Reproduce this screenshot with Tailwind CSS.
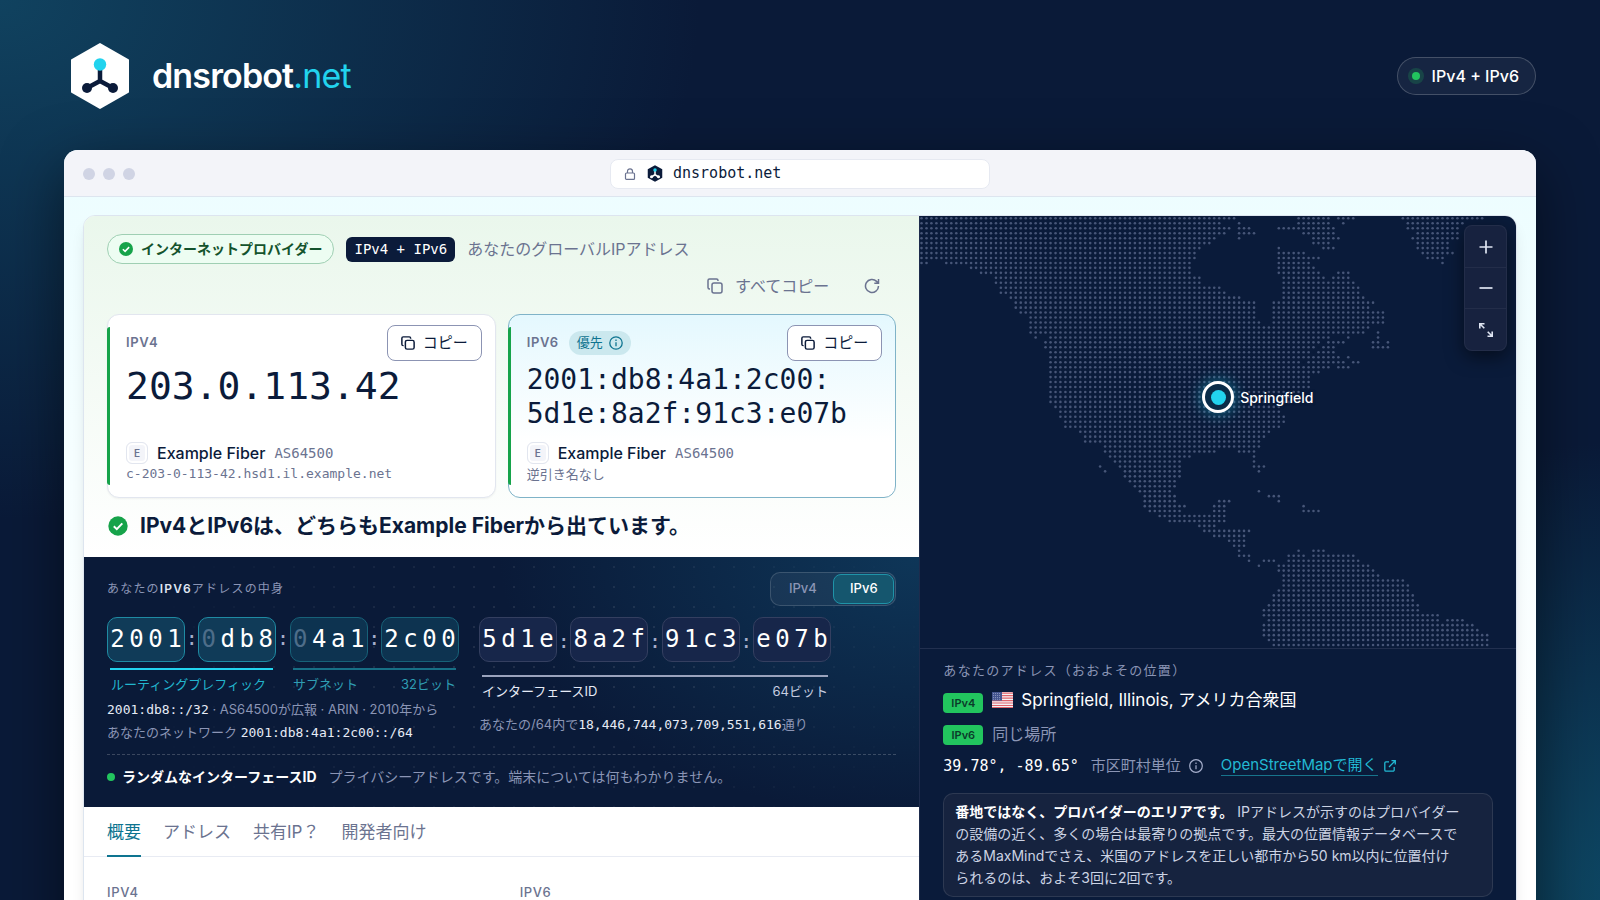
<!DOCTYPE html>
<html lang="ja">
<head>
    <meta charset="UTF-8">
    <meta name="viewport" content="width=device-width, initial-scale=1.0">
    <title>dnsrobot.net - IPv4 + IPv6</title>
    <script src="https://cdn.jsdelivr.net/npm/@tailwindcss/browser@4"></script>
    <style>
        body {
            font-family: 'Inter', 'Noto Sans CJK JP', sans-serif;
        }
        .mono {
            font-family: 'DejaVu Sans Mono', 'Noto Sans CJK JP', monospace;
        }
        /* Page backdrop: navy with teal light in two corners */
        .backdrop {
            background:
                radial-gradient(700px 520px at 0% 0%, #10425f 0%, rgba(16, 66, 95, 0) 100%),
                radial-gradient(620px 460px at 104% 100%, #0e4a66 0%, rgba(14, 74, 102, 0) 100%),
                #0a1a38;
        }
        /* Faint dot grid behind the address anatomy */
        .dot-grid {
            background-image: radial-gradient(circle, rgba(255, 255, 255, 0.09) 1px, transparent 1px);
            background-size: 20px 20px;
            mask-image: radial-gradient(ellipse 50% 90% at 55% 45%, #000 30%, transparent 100%);
        }
    </style>
</head>

<body class="backdrop h-screen overflow-hidden px-16 text-[#0b1b3a]">
    <!-- Header -->
    <header class="flex h-[150px] items-center justify-between pt-[2px]">
        <a href="#" class="flex items-center gap-[22px] pl-[6px]">
            <svg class="h-[68px] w-[60px]" viewBox="0 0 60 68" fill="none">
                <path d="M30 2 L58 18 V50 L30 66 L2 50 V18 Z" fill="#fff" stroke="#fff" stroke-width="2" stroke-linejoin="round"/>
                <path d="M30 24 V39 M17 46 L30 39 L43 46" stroke="#0b1b3a" stroke-width="4.5" stroke-linejoin="round"/>
                <circle cx="17" cy="46" r="5" fill="#0b1b3a"/>
                <circle cx="43" cy="46" r="5" fill="#0b1b3a"/>
                <circle cx="30" cy="22.500" r="6.200" fill="#22d3ee"/>
            </svg>
            <span class="text-[34px] leading-10 font-semibold tracking-tight text-white">dnsrobot<span class="font-normal text-[#22d3ee]">.net</span></span>
        </a>
        <div class="flex h-[38px] items-center gap-3 rounded-full border border-white/20 bg-white/5 pr-4 pl-[14px] text-[16px] font-medium text-white">
            <span class="h-2 w-2 rounded-full bg-[#22c55e] ring-4 ring-[#22c55e]/20"></span>
            IPv4 + IPv6
        </div>
    </header>

    <!-- Browser window -->
    <div class="overflow-hidden rounded-t-[14px] bg-linear-to-b from-[#ecfdff] to-white to-80% shadow-[0_20px_60px_rgba(0,0,0,0.5)]">
        <div class="grid h-[47px] grid-cols-[1fr_380px_1fr] items-center border-b border-[#dde5ef] bg-[#f3f4f9] px-[19px] pt-px">
            <div class="flex gap-2">
                <span class="h-3 w-3 rounded-full bg-[#d0d4e4]"></span>
                <span class="h-3 w-3 rounded-full bg-[#d0d4e4]"></span>
                <span class="h-3 w-3 rounded-full bg-[#d0d4e4]"></span>
            </div>
            <div class="mono flex h-[30px] items-center rounded-lg border border-[#e6e9f1] bg-white pl-[13px] text-[15px] font-medium">
                <svg class="mr-[11px] h-3 w-3" viewBox="0 0 12 12" fill="none" stroke="#6b7390" stroke-width="1.200">
                    <rect x="1.500" y="5" width="9" height="6.400" rx="1"/>
                    <path d="M3.500 5 V3.300 a2.500 2.500 0 0 1 5 0 V5"/>
                </svg>
                <svg class="mr-[10px] h-[17px] w-4" viewBox="0 0 60 68" fill="none">
                    <path d="M30 1 L59 17 V51 L30 67 L1 51 V17 Z" fill="#0b1b3a"/>
                    <path d="M30 22 V39 M17 47 L30 39 L43 47" stroke="#fff" stroke-width="6"/>
                    <circle cx="16" cy="47" r="6" fill="#fff"/>
                    <circle cx="44" cy="47" r="6" fill="#fff"/>
                    <circle cx="30" cy="20" r="7" fill="#22d3ee"/>
                </svg>
                dnsrobot.net
            </div>
        </div>

        <div class="px-[19px] pt-[18px]">
            <main class="grid grid-cols-[7fr_5fr] overflow-hidden rounded-t-xl border border-[#dde5ef] bg-white shadow-lg">
                <!-- Left column -->
                <div class="min-w-0">
                    <section class="bg-linear-to-b from-[#eaf7ec] to-white px-[23px] pt-[18px] pb-[15px]">
                        <div class="flex h-[30px] items-center gap-3">
                            <span class="flex h-[30px] items-center gap-2 rounded-full border border-[#9fcfb3] bg-[#edfdf2] px-[11px] text-[14px] leading-5 font-bold text-[#14532d]">
                                <svg class="h-[14px] w-[14px]" viewBox="0 0 20 20"><circle cx="10" cy="10" r="10" fill="#16a34a"/><path d="M5.500 10.300 L8.700 13.400 L14.500 7.300" fill="none" stroke="#fff" stroke-width="2.200"/></svg>
                                インターネットプロバイダー
                            </span>
                            <span class="mono flex h-[25px] items-center rounded-md bg-[#0b1b3a] px-2 text-[14px] text-white">IPv4 + IPv6</span>
                            <span class="text-[16px] leading-5 text-[#6b7390]">あなたのグローバルIPアドレス</span>
                        </div>
                        <div class="mt-[2px] flex h-10 items-center justify-end text-[#6b7390]">
                            <button class="flex h-10 items-center gap-3 px-[19px] text-[16px]">
                                <svg class="h-4 w-4" viewBox="0 0 16 16" fill="none" stroke="currentColor" stroke-width="1.500"><rect x="5" y="5" width="10" height="10" rx="2"/><path d="M3 11 H2.500 A1.500 1.500 0 0 1 1 9.500 V2.500 A1.500 1.500 0 0 1 2.500 1 H9.500 A1.500 1.500 0 0 1 11 2.500 V3"/></svg>
                                すべてコピー
                            </button>
                            <button aria-label="更新" class="flex h-10 w-12 items-center justify-center">
                                <svg class="h-4 w-4" viewBox="0 0 16 16" fill="none" stroke="currentColor" stroke-width="1.500"><path d="M14.500 8 A6.500 6.500 0 1 1 12.600 3.400 L14.500 5.200 M14.500 1 V5.200 H10.300"/></svg>
                            </button>
                        </div>

                        <div class="mt-2 grid grid-cols-2 gap-3">
                            <article class="relative rounded-xl border border-[#e2e6ef] bg-white pt-[10px] pr-[13px] pb-[13px] pl-[18px] shadow-xs">
                                <span class="absolute top-3 bottom-3 -left-px w-[3px] rounded-l bg-[#16a34a]"></span>
                                <div class="flex h-9 items-center justify-between">
                                    <h3 class="text-[13px] font-semibold tracking-wider text-[#6b7390]">IPV4</h3>
                                    <button class="flex h-9 items-center gap-2 rounded-lg border border-[#8c94b3] bg-white px-[13px] text-[15px]">
                                        <svg class="h-[14px] w-[14px]" viewBox="0 0 16 16" fill="none" stroke="currentColor" stroke-width="1.700"><rect x="5" y="5" width="10" height="10" rx="2"/><path d="M3 11 H2.500 A1.500 1.500 0 0 1 1 9.500 V2.500 A1.500 1.500 0 0 1 2.500 1 H9.500 A1.500 1.500 0 0 1 11 2.500 V3"/></svg>
                                        コピー
                                    </button>
                                </div>
                                <p class="mono mt-[2px] h-[68px] text-[38px] leading-[46px]">203.0.113.42</p>
                                <div class="mt-[11px] flex h-[22px] items-center gap-[9px]">
                                    <span class="flex h-[22px] w-[22px] items-center justify-center rounded-md border border-[#e2e6ef] bg-[#f3f4f9] text-[10px] font-semibold text-[#6b7390] ring-2 ring-white ring-inset">E</span>
                                    <span class="text-[16px] font-medium">Example Fiber</span>
                                    <span class="mono text-[14px] text-[#6b7390]">AS64500</span>
                                </div>
                                <p class="mono text-[13px] leading-5 text-[#6b7390]">c-203-0-113-42.hsd1.il.example.net</p>
                            </article>

                            <article class="relative rounded-xl border border-[#7fb3c8] bg-linear-to-b from-[#e4f8fe] to-white to-70% pt-[10px] pr-[13px] pb-[13px] pl-[18px]">
                                <span class="absolute top-3 bottom-3 -left-px w-[3px] rounded-l bg-[#16a34a]"></span>
                                <div class="flex h-9 items-center">
                                    <h3 class="text-[13px] font-semibold tracking-wider text-[#6b7390]">IPV6</h3>
                                    <span class="ml-[10px] flex h-6 items-center gap-[6px] rounded-full bg-[#cbe8ee] px-2 text-[13px] text-[#0e7490]">
                                        優先
                                        <svg class="h-[14px] w-[14px]" viewBox="0 0 14 14" fill="none" stroke="currentColor" stroke-width="1.300"><circle cx="7" cy="7" r="6.200"/><path d="M7 6.200 V10.200 M7 3.600 V5"/></svg>
                                    </span>
                                    <button class="ml-auto flex h-9 items-center gap-2 rounded-lg border border-[#8c94b3] bg-white px-[13px] text-[15px]">
                                        <svg class="h-[14px] w-[14px]" viewBox="0 0 16 16" fill="none" stroke="currentColor" stroke-width="1.700"><rect x="5" y="5" width="10" height="10" rx="2"/><path d="M3 11 H2.500 A1.500 1.500 0 0 1 1 9.500 V2.500 A1.500 1.500 0 0 1 2.500 1 H9.500 A1.500 1.500 0 0 1 11 2.500 V3"/></svg>
                                        コピー
                                    </button>
                                </div>
                                <p class="mono mt-[2px] h-[68px] text-[28px] leading-[34px]">2001:db8:4a1:2c00:<br>5d1e:8a2f:91c3:e07b</p>
                                <div class="mt-[11px] flex h-[22px] items-center gap-[9px]">
                                    <span class="flex h-[22px] w-[22px] items-center justify-center rounded-md border border-[#e2e6ef] bg-[#f3f4f9] text-[10px] font-semibold text-[#6b7390] ring-2 ring-white ring-inset">E</span>
                                    <span class="text-[16px] font-medium">Example Fiber</span>
                                    <span class="mono text-[14px] text-[#6b7390]">AS64500</span>
                                </div>
                                <p class="text-[13px] leading-5 text-[#6b7390]">逆引き名なし</p>
                            </article>
                        </div>

                        <h2 class="mt-3 flex h-8 items-center gap-3 text-[21px] leading-8 font-bold">
                            <svg class="ml-px h-5 w-5" viewBox="0 0 20 20"><circle cx="10" cy="10" r="9.700" fill="#16a34a"/><path d="M5.800 10.300 L8.800 13.200 L14.300 7.400" fill="none" stroke="#fff" stroke-width="2"/></svg>
                            <span>IPv4とIPv6は、どちらもExample Fiberから出ています。</span>
                        </h2>
                    </section>

                    <!-- IPv6 anatomy -->
                    <section class="relative h-[250px] bg-[#0a1a38] bg-[radial-gradient(420px_260px_at_100%_0%,#0e3658,transparent)] px-[23px] pt-[15px] text-[13px] text-[#8b95b5]">
                        <div class="dot-grid pointer-events-none absolute inset-0"></div>
                        <div class="relative flex h-[33px] items-center justify-between">
                            <h3 class="text-[12px] tracking-widest">あなたの<span class="font-semibold text-[#dfe5f2]">IPV6</span>アドレスの中身</h3>
                            <div class="flex h-[34px] items-center rounded-[10px] border border-white/15 bg-white/5 p-px font-medium">
                                <button class="h-[30px] w-[61px]">IPv4</button>
                                <button class="h-[30px] w-[61px] rounded-lg border border-[#1f93a8] bg-[#15566e] text-white">IPv6</button>
                            </div>
                        </div>

                        <div class="relative mt-3 flex gap-5">
                            <div class="w-[352px]">
                                <div class="mono flex h-[45px] text-[24px] leading-[43px] text-white">
                                    <div class="flex w-[78px] rounded-[10px] border border-[#1f8ba3] bg-[#103b58] text-center"><span class="flex-1">2</span><span class="flex-1">0</span><span class="flex-1">0</span><span class="flex-1">1</span></div>
                                    <span class="flex-1 text-center text-[20px] text-[#a5aecb]">:</span>
                                    <div class="flex w-[78px] rounded-[10px] border border-[#1f8ba3] bg-[#103b58] text-center"><span class="flex-1 text-[#4e6d89]">0</span><span class="flex-1">d</span><span class="flex-1">b</span><span class="flex-1">8</span></div>
                                    <span class="flex-1 text-center text-[20px] text-[#a5aecb]">:</span>
                                    <div class="flex w-[78px] rounded-[10px] border border-[#176178] bg-[#0d3350] text-center"><span class="flex-1 text-[#4e6d89]">0</span><span class="flex-1">4</span><span class="flex-1">a</span><span class="flex-1">1</span></div>
                                    <span class="flex-1 text-center text-[20px] text-[#a5aecb]">:</span>
                                    <div class="flex w-[78px] rounded-[10px] border border-[#176178] bg-[#0d3350] text-center"><span class="flex-1">2</span><span class="flex-1">c</span><span class="flex-1">0</span><span class="flex-1">0</span></div>
                                </div>
                                <div class="mt-[6px] grid grid-cols-2 gap-5 px-[3px] leading-5">
                                    <div class="border-t-2 border-[#22d3ee] pt-1 pl-px whitespace-nowrap text-[#22b5cd]">ルーティングプレフィック</div>
                                    <div class="flex justify-between border-t-2 border-[#176f86] pt-1 text-[#2f9db3]"><span>サブネット</span><span>32ビット</span></div>
                                </div>
                                <p class="mt-1 leading-[23px] whitespace-nowrap"><span class="mono text-[#e6ebf6]">2001:db8::/32</span> · AS64500が広報 · ARIN · 2010年から</p>
                                <p class="leading-[23px] whitespace-nowrap">あなたのネットワーク <span class="mono text-[#e6ebf6]">2001:db8:4a1:2c00::/64</span></p>
                            </div>
                            <div class="w-[352px]">
                                <div class="mono flex h-[45px] text-[24px] leading-[43px] text-white">
                                    <div class="flex w-[78px] rounded-[10px] border border-[#343f60] bg-[#17264a] text-center"><span class="flex-1">5</span><span class="flex-1">d</span><span class="flex-1">1</span><span class="flex-1">e</span></div>
                                    <span class="flex-1 text-center text-[20px] leading-[49px] text-[#a5aecb]">:</span>
                                    <div class="flex w-[78px] rounded-[10px] border border-[#343f60] bg-[#17264a] text-center"><span class="flex-1">8</span><span class="flex-1">a</span><span class="flex-1">2</span><span class="flex-1">f</span></div>
                                    <span class="flex-1 text-center text-[20px] leading-[49px] text-[#a5aecb]">:</span>
                                    <div class="flex w-[78px] rounded-[10px] border border-[#343f60] bg-[#17264a] text-center"><span class="flex-1">9</span><span class="flex-1">1</span><span class="flex-1">c</span><span class="flex-1">3</span></div>
                                    <span class="flex-1 text-center text-[20px] leading-[49px] text-[#a5aecb]">:</span>
                                    <div class="flex w-[78px] rounded-[10px] border border-[#343f60] bg-[#17264a] text-center"><span class="flex-1">e</span><span class="flex-1">0</span><span class="flex-1">7</span><span class="flex-1">b</span></div>
                                </div>
                                <div class="mx-[3px] mt-[13px] flex justify-between border-t-2 border-[#9aa3bd] pt-1 leading-5 text-[#c7cee0]"><span class="text-[#e6ebf6]">インターフェースID</span><span>64ビット</span></div>
                                <p class="mt-3 leading-[23px] whitespace-nowrap">あなたの/64内で<span class="mono text-[#e6ebf6]">18,446,744,073,709,551,616</span>通り</p>
                            </div>
                        </div>

                        <div class="relative mt-[10px] flex items-center border-t border-dashed border-white/20 pt-[10px] text-[14px] leading-6">
                            <span class="mr-[7px] h-2 w-2 rounded-full bg-[#22c55e]"></span>
                            <strong class="mr-3 text-white">ランダムなインターフェースID</strong>
                            <span>プライバシーアドレスです。端末については何もわかりません。</span>
                        </div>
                    </section>

                    <!-- Tabs -->
                    <nav class="flex h-[50px] gap-[22px] border-b border-[#e8ebf3] px-[23px] text-[17px] leading-[50px] text-[#6b7390]">
                        <a href="#" class="h-[50px] border-b-2 border-[#0e7490] text-[#0e7490]">概要</a>
                        <a href="#">アドレス</a>
                        <a href="#">共有IP？</a>
                        <a href="#">開発者向け</a>
                    </nav>
                    <div class="grid h-24 grid-cols-2 gap-9 px-[23px] pt-[26px] text-[13px] font-medium tracking-wider text-[#6b7390]">
                        <h4>IPV4</h4>
                        <h4>IPV6</h4>
                    </div>
                </div>

                <!-- Right column -->
                <aside class="min-w-0 border-l border-[#1d2b4c] bg-[#0a1b3a] text-[#8b95b5]">
                    <div class="relative">
                        <svg id="map" class="block w-full" viewBox="0 0 596 432" fill="#475678"></svg>
                        <div class="absolute top-[42%] left-1/2 flex -translate-y-1/2 items-center">
                            <span class="-ml-4 flex h-8 w-8 items-center justify-center rounded-full border-[3px] border-white bg-[#0a2c48] shadow-[0_0_12px_4px_rgba(34,211,238,0.28)]">
                                <span class="h-[15px] w-[15px] rounded-full bg-[#22d3ee]"></span>
                            </span>
                            <span class="ml-[6px] text-[14px] font-medium text-white [text-shadow:0_0_3px_#0a1b3a,0_0_3px_#0a1b3a]">Springfield</span>
                        </div>
                        <div class="absolute top-[9px] right-[9px] flex w-[43px] flex-col divide-y divide-white/5 rounded-lg border border-white/5 bg-[#17223f] text-[#dfe5f2] shadow-[0_6px_18px_rgba(0,0,0,0.5)]">
                            <button aria-label="拡大" class="flex h-[42px] items-center justify-center"><svg class="h-[14px] w-[14px]" viewBox="0 0 14 14" stroke="currentColor" stroke-width="1.700"><path d="M7 .5 V13.500 M.5 7 H13.500"/></svg></button>
                            <button aria-label="縮小" class="flex h-[41px] items-center justify-center"><svg class="h-[14px] w-[14px]" viewBox="0 0 14 14" stroke="currentColor" stroke-width="1.700"><path d="M.5 7 H13.500"/></svg></button>
                            <button aria-label="全画面" class="flex h-[41px] items-center justify-center"><svg class="h-[14px] w-[14px]" viewBox="0 0 14 14" fill="none" stroke="currentColor" stroke-width="1.600"><path d="M.8 5.500 V.8 H5.500 M.8 .8 L5.300 5.300 M13.200 8.500 V13.200 H8.500 M13.200 13.200 L8.700 8.700"/></svg></button>
                        </div>
                    </div>

                    <div class="border-t border-[#22304f] px-[23px] pt-[11px]">
                        <h3 class="text-[13px] leading-5 tracking-widest">あなたのアドレス（おおよその位置）</h3>
                        <div class="mt-[3px] flex h-[34px] items-center">
                            <span class="mt-[6px] flex h-5 w-10 items-center justify-center rounded bg-[#22c55e] text-[11px] font-semibold text-[#0b3b2a]">IPv4</span>
                            <svg class="mr-2 ml-[9px] h-4 w-[21px]" viewBox="0 0 21 16">
                                <rect width="21" height="16" rx="1" fill="#f4f1f4"/>
                                <path d="M0 1.200H21M0 3.600H21M0 6.100H21M0 8.600H21M0 11H21M0 13.500H21M0 15.500H21" stroke="#e0636b" stroke-width="1.200"/>
                                <rect width="10" height="8.600" fill="#44558f"/>
                                <path d="M1 1.500H9M1 3.500H9M1 5.500H9M1 7.300H9" stroke="#b8c1dc" stroke-width=".7" stroke-dasharray=".8 1.200"/>
                            </svg>
                            <span class="text-[17px] leading-6 text-white">Springfield, Illinois, アメリカ合衆国</span>
                        </div>
                        <div class="flex h-[34px] items-center gap-[9px]">
                            <span class="mt-[2px] flex h-5 w-10 items-center justify-center rounded bg-[#22c55e] text-[11px] font-semibold text-[#0b3b2a]">IPv6</span>
                            <span class="text-[16px] leading-6">同じ場所</span>
                        </div>
                        <div class="flex h-[30px] items-center text-[15px] leading-5">
                            <span class="mono text-white">39.78°, -89.65°</span>
                            <span class="ml-3">市区町村単位</span>
                            <svg class="mr-[18px] ml-2 h-[14px] w-[14px]" viewBox="0 0 14 14" fill="none" stroke="#a5aecb" stroke-width="1.200"><circle cx="7" cy="7" r="6.300"/><path d="M7 6.200 V10.200 M7 3.600 V5"/></svg>
                            <a href="#" class="flex items-center gap-[6px] text-[#22b9d3]">
                                <span class="border-b border-[#17748c]">OpenStreetMapで開く</span>
                                <svg class="h-3 w-3" viewBox="0 0 12 12" fill="none" stroke="currentColor" stroke-width="1.300"><path d="M5 1.800 H2 A1.200 1.200 0 0 0 .8 3 V10 A1.200 1.200 0 0 0 2 11.200 H9 A1.200 1.200 0 0 0 10.200 10 V7 M7.500 .7 H11.300 V4.500 M11 1 L5 7"/></svg>
                            </a>
                        </div>
                        <p class="mt-3 mb-6 rounded-[10px] border border-white/10 bg-[#16233f] px-[11px] py-[7px] text-[14px] leading-[22px] whitespace-nowrap text-[#ccd3e4]">
                            <strong class="text-white">番地ではなく、プロバイダーのエリアです。</strong> IPアドレスが示すのはプロバイダー<br>の設備の近く、多くの場合は最寄りの拠点です。最大の位置情報データベースで<br>あるMaxMindでさえ、米国のアドレスを正しい都市から50 km以内に位置付け<br>られるのは、およそ3回に2回です。
                        </p>
                    </div>
                </aside>
            </main>
        </div>
    </div>

    <script>
        // Land cells of the dotted map: one entry per row, each a list of column ranges
        const rows = [
            '0-63 76-82 84-87 97-113', '0-60 64 76-82 85 98-109', '0-62 64-66 72-83 98-108', '0-61 64-67 77-83 100-108',
            '0-59 64 79-84 99-108', '0-58 79-82 100-106', '0-56 72 81-83 100-106', '0-55 72-77 101-107',
            '0-55 72-80 102-105', '0-1 5-54 72-78 105', '10-54 72-79', '12-54 72-80 84-86',
            '15-56 73-81 83-86', '15-56 73-87', '16-60 73-88', '16-61 73-88',
            '18-64 73-89', '19-67 71-91', '19-67 71-90', '20-67 71-93',
            '22-67 71-93', '22-68 71-93', '22-90', '22-89 92',
            '23 26-82 86 92', '25-80 82-85 91-92 94', '25-79 81-83 91-94', '26-78 80-83',
            '26-84 86', '26-76 78-85 87-88', '26-82 84-86', '26-80',
            '26-78', '26-78', '26-78', '26-76', '26-75', '26-74',
            '27-72', '28-72', '28-73', '29-73', '29-72', '32-70', '33-69', '33-68',
            '37-68', '37-59 64-67', '38-54 67', '39-52 67', '36 40-52 67-69', '37 41-52 68',
            '41-52', '42-51', '43-51', '44-50 68', '45-51 70-72', '45-51 60-62 72',
            '45-53 59-61 77', '46-52 59-61 77-80', '48-61', '50-61', '56-59', '57-66',
            '59-65', '62-65', '63-65', '64 76 79-81', '64-66 74-77 79-87', '66 69-71 74-88',
            '68 72-90', '72-91', '73-92', '73-97', '73-98', '72-98', '71-99', '71-99',
            '70-100', '69-100', '69-104', '70-104 106-109', '69-111', '69-112', '69-114', '70-114', '71-114'
        ];
        const step = 4.965;
        let dots = '';
        rows.forEach((row, r) => {
            row.split(' ').forEach(range => {
                const [from, to = from] = range.split('-').map(Number);
                for (let c = from; c <= to; c++) {
                    dots += `<circle cx="${(1.5 + c * step).toFixed(1)}" cy="${(2.3 + r * step).toFixed(1)}" r="1.3"/>`;
                }
            });
        });
        document.getElementById('map').innerHTML = dots;
    </script>
</body>
</html>
